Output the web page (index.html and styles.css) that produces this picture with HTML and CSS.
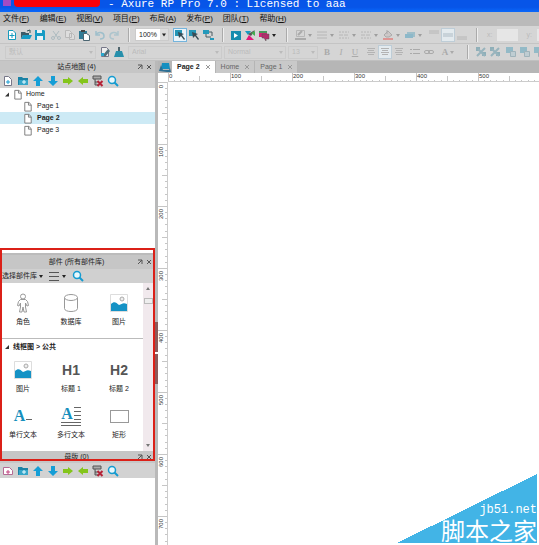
FILE: index.html
```html
<!DOCTYPE html>
<html lang="zh-CN">
<head>
<meta charset="utf-8">
<meta name="viewport" content="width=device-width, initial-scale=1">
<title>Axure RP Pro 7.0</title>
<link rel="stylesheet" href="styles.css">
</head>
<body>
<svg class="defs" aria-hidden="true">
  <symbol id="new" viewBox="0 0 12 12"><path d="M2.5 1.5h4.500l2.500 2.500v6.500h-7z" fill="#fff" stroke="#169bbd"/><path d="M6 4v5M3.500 6.500h5" stroke="#169bbd"/></symbol>
  <symbol id="page" viewBox="0 0 12 12"><path d="M2.500 1.500h4.500l2.500 2.500v7h-7zM6.500 1.500v3h3" fill="#fff" stroke="#777"/></symbol>
  <symbol id="addpage" viewBox="0 0 12 12"><path d="M2.500 1.500h4l3 3v6h-7z" fill="#fff" stroke="#778"/><path d="M6 5v4M4 7h4" stroke="#169bd0"/></symbol>
  <symbol id="addmaster" viewBox="0 0 12 12"><path d="M1.500 2.500h6l3 3v4h-9z" fill="#fff" stroke="#b56a94"/><path d="M6 5v4M4 7h4" stroke="#c2417f"/></symbol>
  <symbol id="open" viewBox="0 0 12 12"><path d="M1 3h4l1 1h3v2H3l-2 4z" fill="#3c5c68"/><path d="M3 6h9l-2 4H1z" fill="#159bc4"/><path d="M7 2l3-1v3" fill="none" stroke="#355"/></symbol>
  <symbol id="save" viewBox="0 0 12 12"><path d="M1 1h9l1 1v9H1z" fill="#159bc4"/><path d="M3 1h5v3H3zM3 7h6v4H3z" fill="#e8f4f8"/></symbol>
  <symbol id="cut" viewBox="0 0 12 12"><path d="M3 2l5 7M9 2L4 9" stroke="#aebbc0"/><circle cx="3" cy="9" r="1.500" fill="none" stroke="#aebbc0"/><circle cx="9" cy="9" r="1.500" fill="none" stroke="#aebbc0"/></symbol>
  <symbol id="copy" viewBox="0 0 12 12"><path d="M1.500 1.500h4l2 2v5h-6zM5.500 4.500h3l2 2v4h-5z" fill="#ddd" stroke="#b9b9b9"/></symbol>
  <symbol id="paste" viewBox="0 0 12 12"><path d="M1 2h8v8H1z" fill="#327c96"/><path d="M3 1h4v2H3z" fill="#444"/><path d="M5.500 4.500h3l3 2v5h-6z" fill="#fff" stroke="#4b6571"/></symbol>
  <symbol id="undo" viewBox="0 0 12 12"><path d="M2 2v4h4M2 6c2-4 8-3 8 1 0 2-2 3-4 3" fill="none" stroke="#9fbfcb" stroke-width="1.500"/></symbol>
  <symbol id="redo" viewBox="0 0 12 12"><path d="M10 2v4H6M10 6c-2-4-8-3-8 1 0 2 2 3 4 3" fill="none" stroke="#aec5cd" stroke-width="1.500"/></symbol>
  <symbol id="pointer" viewBox="0 0 12 12"><path d="M1 1h7v6H1z" fill="#2495b5"/><path d="M4 3l6 2-2 1 3 4-1 1-3-4-2 2z" fill="#374b54"/></symbol>
  <symbol id="connector" viewBox="0 0 12 12"><path d="M1 1h6v4H1zM8 9h4v2H8z" fill="#2499bb"/><path d="M4 5v3h5M7 3h3v4" fill="none" stroke="#4b5b61"/></symbol>
  <symbol id="preview" viewBox="0 0 12 12"><path d="M1 2h10v9H1z" fill="#168cae"/><path d="M4 4l4 2.500L4 9z" fill="#fff"/></symbol>
  <symbol id="share" viewBox="0 0 12 12"><path d="M1 2h6L4 6z" fill="#169ac0"/><path d="M11 1L7 7 4 5z" fill="#555"/><path d="M2 11l3-5 5 5z" fill="#e41678"/><path d="M7 4l4-2v5z" fill="#45aa50"/></symbol>
  <symbol id="publish" viewBox="0 0 12 12"><path d="M1 2h8v6H1z" fill="#d52375"/><path d="M1 2h8v2H1z" fill="#4a995c"/><path d="M4 5h7v5H8v2L6 9H4z" fill="#b22e6b" stroke="#555" stroke-width=".5"/></symbol>
  <symbol id="linecolor" viewBox="0 0 12 12"><path d="M2.500 1.500h8v6h-8z" fill="none" stroke="#aaa"/><path d="M4 6l4-4M1 10h11" stroke="#999" stroke-width="2"/></symbol>
  <symbol id="lines" viewBox="0 0 12 12"><path d="M1 3h10M1 6h10M1 9h10" stroke="#aaa"/></symbol>
  <symbol id="dashes" viewBox="0 0 12 12"><path d="M1 3h10M1 9h10" stroke="#aaa" stroke-dasharray="2 1"/><path d="M1 6h10" stroke="#aaa" stroke-dasharray="4 1"/></symbol>
  <symbol id="bucket" viewBox="0 0 12 12"><path d="M2 6l4-4 4 4-3 2H4zM5 1v4" fill="#c9c2c2" stroke="#999"/><path d="M1 10h10" stroke="#e17b78" stroke-width="2"/></symbol>
  <symbol id="shape" viewBox="0 0 12 12"><path d="M3 3h8v5H3z" fill="#87b5c4"/><path d="M1 5h8v4H1z" fill="#6fadc4"/></symbol>
  <symbol id="top" viewBox="0 0 12 12"><path d="M1 2h10M1 4h10" stroke="#aaa"/></symbol>
  <symbol id="mid" viewBox="0 0 12 12"><path d="M1 5h10M1 7h10" stroke="#9db2be"/></symbol>
  <symbol id="bot" viewBox="0 0 12 12"><path d="M1 8h10M1 10h10" stroke="#aaa"/></symbol>
  <symbol id="align" viewBox="0 0 12 12"><path d="M2 2.500h8M3 4.500h6M2 6.500h8M3 8.500h6" stroke="#a5a5a5"/></symbol>
  <symbol id="bullets" viewBox="0 0 12 12"><path d="M1 3.500h2M4 3.500h7M1 7.500h2M4 7.500h7" stroke="#999"/></symbol>
  <symbol id="link" viewBox="0 0 12 12"><rect x="1.500" y="4.500" width="5" height="3" rx="1.500" fill="none" stroke="#999"/><rect x="5.500" y="4.500" width="5" height="3" rx="1.500" fill="none" stroke="#999"/></symbol>
  <symbol id="styleedit" viewBox="0 0 12 12"><path d="M2.500 1.500h5l2 2v7h-7z" fill="#eee" stroke="#778"/><path d="M4 9l5-6 2 2-5 6z" fill="#536f79"/><path d="M2 7h3v3H2z" fill="#29a7ce"/></symbol>
  <symbol id="brush" viewBox="0 0 12 12"><path d="M5 1h2v5H5z" fill="#50656d"/><path d="M3 5h6l2 6H1z" fill="#268fab"/></symbol>
  <symbol id="group" viewBox="0 0 12 12"><path d="M1 1h4v4H1zM7 6h4v4H7z" fill="#729fad"/><path d="M2 10l8-8M3 3l7 7" stroke="#7fa7b4" stroke-width="2"/></symbol>
  <symbol id="layers" viewBox="0 0 12 12"><path d="M1 1h7v6H1z" fill="#78afc2"/><path d="M5.500 5.500h5v5h-5z" fill="#b6cbd2" stroke="#8ba6af"/></symbol>
  <symbol id="folder" viewBox="0 0 12 12"><path d="M1 2h4l1 1h5v7H1z" fill="#1b82a5"/><path d="M2 5h9v5H2z" fill="#35a6c9"/><path d="M7 5v4M5 7h4" stroke="#e8faff"/></symbol>
  <symbol id="up" viewBox="0 0 12 12"><path d="M6 1l5 5H8v5H4V6H1z" fill="#159ed6"/></symbol>
  <symbol id="down" viewBox="0 0 12 12"><path d="M6 11l5-5H8V1H4v5H1z" fill="#159ed6"/></symbol>
  <symbol id="right" viewBox="0 0 12 12"><path d="M11 6L6 2v2H1v4h5v2z" fill="#84c51b"/></symbol>
  <symbol id="left" viewBox="0 0 12 12"><path d="M1 6l5-4v2h5v4H6v2z" fill="#84c51b"/></symbol>
  <symbol id="delete" viewBox="0 0 12 12"><path d="M1 1h8v3H1zM3 4v6h3M3 7h3" fill="#aaa" stroke="#555"/><path d="M5.500 6l5 5M10.500 6l-5 5" stroke="#b42338" stroke-width="2"/></symbol>
  <symbol id="search" viewBox="0 0 12 12"><circle cx="5" cy="5" r="3.500" fill="#e9f8fc" stroke="#159bd0" stroke-width="1.500"/><path d="M7.500 7.500l3.500 3.500" stroke="#159bd0" stroke-width="2"/></symbol>
  <symbol id="tabs" viewBox="0 0 12 12"><path d="M3 2h7l1 6H2z" fill="#168fc0"/><path d="M0 10l2-6 2 5h6l1-2 1 4H8z" fill="#2d6f94"/></symbol>
  <symbol id="pop" viewBox="0 0 8 8"><path d="M2 2h4v4M6 2L2 6" fill="none" stroke="#555"/></symbol>
  <symbol id="close" viewBox="0 0 8 8"><path d="M2 2l4 4M6 2L2 6" stroke="currentColor"/></symbol>
  <symbol id="arrow" viewBox="0 0 6 6"><path d="M5 1v4H1z" fill="#333"/></symbol>
  <symbol id="caret" viewBox="0 0 8 8"><path d="M2 3h4L4 6z" fill="currentColor"/></symbol>
  <symbol id="menu" viewBox="0 0 12 12"><path d="M1 2.500h10M1 6.500h10M1 10.500h10" stroke="#555"/></symbol>
  <symbol id="person" viewBox="0 0 20 20"><circle cx="10" cy="3.500" r="2.500"/><path d="M7.500 6.500h5l2 2 1 4-1.500.5-1.500-3v4l1 5h-2.500L10 14l-1 5H6.500l1-5v-4L6 13l-1.500-.5 1-4z"/></symbol>
  <symbol id="database" viewBox="0 0 20 20"><path d="M3.500 4.500v11c0 4 13 4 13 0v-11"/><ellipse cx="10" cy="4.500" rx="6.500" ry="3"/></symbol>
  <symbol id="image" viewBox="0 0 20 20"><path d="M1.500 1.500h17v17h-17z" fill="#fff" stroke="#ddd"/><path d="M2 11c3-3 5-2 8 1 3-1 4-3 8-1v7H2z" fill="#1592c5"/><circle cx="13" cy="6" r="2" fill="#eee" stroke="#aaa"/></symbol>
  <symbol id="ticksh" viewBox="0 0 62 9"><path d="M.5 0v9M31.500 3v6M6.500 7v2M12.500 7v2M18.500 7v2M25.500 7v2M37.500 7v2M43.500 7v2M50.500 7v2M56.500 7v2" stroke="#c6c6c6"/></symbol>
  <symbol id="ticksv" viewBox="0 0 10 62"><path d="M0 .5h10M4 31.500h6M7 6.500h3M7 12.500h3M7 18.500h3M7 25.500h3M7 37.500h3M7 43.500h3M7 50.500h3M7 56.500h3" stroke="#c6c6c6"/></symbol>
</svg>

<header class="titlebar"><span class="badge"></span><span class="redacted"></span><span>- Axure RP Pro 7.0 : Licensed to aaa</span></header>
<nav class="menubar">
  <button>文件(<u>F</u>)</button><button>编辑(<u>E</u>)</button><button>视图(<u>V</u>)</button><button>项目(<u>P</u>)</button><button>布局(<u>A</u>)</button><button>发布(<u>P</u>)</button><button>团队(<u>T</u>)</button><button>帮助(<u>H</u>)</button>
</nav>
<div class="toolbar main-tools">
  <div class="group"><button aria-label="新建"><svg><use href="#new"/></svg></button><button aria-label="打开"><svg><use href="#open"/></svg></button><button aria-label="保存"><svg><use href="#save"/></svg></button></div>
  <div class="group"><button aria-label="剪切"><svg><use href="#cut"/></svg></button><button aria-label="复制"><svg><use href="#copy"/></svg></button><button aria-label="粘贴"><svg><use href="#paste"/></svg></button></div>
  <div class="group"><button aria-label="撤销"><svg><use href="#undo"/></svg></button><button aria-label="重做"><svg><use href="#redo"/></svg></button></div>
  <i class="sep"></i>
  <span class="pick zoom"><select aria-label="缩放"><option>100%</option></select><svg><use href="#caret"/></svg></span>
  <div class="group"><button class="on" aria-label="选择"><svg><use href="#pointer"/></svg></button><button aria-label="包含选择"><svg><use href="#pointer"/></svg></button><button aria-label="连接"><svg><use href="#connector"/></svg></button></div>
  <i class="sep"></i>
  <div class="group"><button aria-label="预览"><svg><use href="#preview"/></svg></button><button aria-label="共享"><svg><use href="#share"/></svg></button><button class="drop" aria-label="生成"><svg><use href="#publish"/></svg><svg class="caret"><use href="#caret"/></svg></button></div>
  <i class="sep"></i>
  <div class="group faded"><button class="drop" aria-label="线条颜色"><svg><use href="#linecolor"/></svg><svg class="caret"><use href="#caret"/></svg></button><button class="drop" aria-label="线宽"><svg><use href="#lines"/></svg><svg class="caret"><use href="#caret"/></svg></button><button class="drop" aria-label="线型"><svg><use href="#dashes"/></svg><svg class="caret"><use href="#caret"/></svg></button><button class="drop" aria-label="箭头"><svg><use href="#dashes"/></svg><svg class="caret"><use href="#caret"/></svg></button><button class="drop" aria-label="填充"><svg><use href="#bucket"/></svg><svg class="caret"><use href="#caret"/></svg></button><button class="drop" aria-label="阴影"><svg><use href="#shape"/></svg><svg class="caret"><use href="#caret"/></svg></button></div>
  <div class="group faded"><button aria-label="顶部"><svg><use href="#top"/></svg></button><button class="on" aria-label="中部"><svg><use href="#mid"/></svg></button><button aria-label="底部"><svg><use href="#bot"/></svg></button></div>
  <i class="sep"></i>
  <label class="coord">x:<input></label><label class="coord">y:<input></label>
</div>
<div class="toolbar format-tools">
  <span class="pick style"><select aria-label="样式"><option>默认</option></select><svg><use href="#caret"/></svg></span>
  <div class="group"><button aria-label="编辑样式"><svg><use href="#styleedit"/></svg></button><button aria-label="格式刷"><svg><use href="#brush"/></svg></button></div>
  <span class="pick family"><select aria-label="字体"><option>Arial</option></select><svg><use href="#caret"/></svg></span>
  <span class="pick weight"><select aria-label="字形"><option>Normal</option></select><svg><use href="#caret"/></svg></span>
  <span class="pick size"><select aria-label="字号"><option>13</option></select><svg><use href="#caret"/></svg></span>
  <div class="group letters"><button><b>B</b></button><button><em>I</em></button><button><u>U</u></button></div>
  <div class="group faded"><button aria-label="左对齐"><svg><use href="#align"/></svg></button><button class="on" aria-label="居中"><svg><use href="#align"/></svg></button><button aria-label="右对齐"><svg><use href="#align"/></svg></button></div>
  <div class="group faded"><button aria-label="列表"><svg><use href="#bullets"/></svg></button><button aria-label="链接"><svg><use href="#link"/></svg></button></div>
  <div class="group letters"><button class="drop"><b>A</b><svg class="caret"><use href="#caret"/></svg></button></div>
  <i class="sep"></i>
  <div class="group faded"><button aria-label="组合"><svg><use href="#group"/></svg></button><button aria-label="取消组合"><svg><use href="#group"/></svg></button></div>
  <div class="group faded"><button aria-label="置于顶层"><svg><use href="#layers"/></svg></button><button aria-label="置于底层"><svg><use href="#layers"/></svg></button><button aria-label="上移"><svg><use href="#layers"/></svg></button></div>
</div>

<div class="workspace">
  <aside class="sidebar">
    <section class="panel sitemap">
      <div class="panel-head"><h2>站点地图 (4)</h2><button aria-label="弹出"><svg><use href="#pop"/></svg></button><button aria-label="关闭"><svg><use href="#close"/></svg></button></div>
      <div class="panel-tools"><button aria-label="添加页面"><svg><use href="#addpage"/></svg></button><button aria-label="添加文件夹"><svg><use href="#folder"/></svg></button><button aria-label="上移"><svg><use href="#up"/></svg></button><button aria-label="下移"><svg><use href="#down"/></svg></button><button aria-label="降级"><svg><use href="#right"/></svg></button><button aria-label="升级"><svg><use href="#left"/></svg></button><button aria-label="删除"><svg><use href="#delete"/></svg></button><button aria-label="搜索"><svg><use href="#search"/></svg></button></div>
      <ul class="tree">
        <li class="root"><svg class="arrow"><use href="#arrow"/></svg><svg><use href="#page"/></svg>Home</li>
        <li><svg><use href="#page"/></svg>Page 1</li>
        <li class="selected"><svg><use href="#page"/></svg>Page 2</li>
        <li><svg><use href="#page"/></svg>Page 3</li>
      </ul>
    </section>
    <section class="panel widgets">
      <div class="panel-head"><h2>部件 (所有部件库)</h2><button aria-label="弹出"><svg><use href="#pop"/></svg></button><button aria-label="关闭"><svg><use href="#close"/></svg></button></div>
      <div class="library-bar"><button>选择部件库<svg class="caret"><use href="#caret"/></svg></button><button aria-label="选项"><svg><use href="#menu"/></svg><svg class="caret"><use href="#caret"/></svg></button><button aria-label="搜索"><svg><use href="#search"/></svg></button></div>
      <div class="library">
        <div class="library-list">
          <div class="tiles">
            <figure><svg class="outline"><use href="#person"/></svg><figcaption>角色</figcaption></figure>
            <figure><svg class="outline"><use href="#database"/></svg><figcaption>数据库</figcaption></figure>
            <figure><svg><use href="#image"/></svg><figcaption>图片</figcaption></figure>
          </div>
          <h3><svg class="arrow"><use href="#arrow"/></svg>线框图 &gt; 公共</h3>
          <div class="tiles">
            <figure><svg><use href="#image"/></svg><figcaption>图片</figcaption></figure>
            <figure><strong>H1</strong><figcaption>标题 1</figcaption></figure>
            <figure><strong>H2</strong><figcaption>标题 2</figcaption></figure>
            <figure><span class="glyph">A<i class="dash"></i></span><figcaption>单行文本</figcaption></figure>
            <figure><span class="glyph para">A<i class="copy-lines"></i></span><figcaption>多行文本</figcaption></figure>
            <figure><span class="rect"></span><figcaption>矩形</figcaption></figure>
          </div>
        </div>
        <div class="scrollbar"><svg class="flip"><use href="#caret"/></svg><i class="thumb"></i><svg class="end"><use href="#caret"/></svg></div>
      </div>
    </section>
    <section class="panel masters">
      <div class="panel-head"><h2>母版 (0)</h2><button aria-label="弹出"><svg><use href="#pop"/></svg></button><button aria-label="关闭"><svg><use href="#close"/></svg></button></div>
      <div class="panel-tools"><button aria-label="添加母版"><svg><use href="#addmaster"/></svg></button><button aria-label="添加文件夹"><svg><use href="#folder"/></svg></button><button aria-label="上移"><svg><use href="#up"/></svg></button><button aria-label="下移"><svg><use href="#down"/></svg></button><button aria-label="降级"><svg><use href="#right"/></svg></button><button aria-label="升级"><svg><use href="#left"/></svg></button><button aria-label="删除"><svg><use href="#delete"/></svg></button><button aria-label="搜索"><svg><use href="#search"/></svg></button></div>
      <div class="empty"></div>
    </section>
  </aside>
  <div class="splitter"><i class="grip"></i></div>
  <main class="editor">
    <nav class="tabs"><svg><use href="#tabs"/></svg><button class="tab active">Page 2<svg><use href="#close"/></svg></button><button class="tab">Home<svg><use href="#close"/></svg></button><button class="tab">Page 1<svg><use href="#close"/></svg></button></nav>
    <div class="ruler across">
      <span>0<svg><use href="#ticksh"/></svg></span><span>100<svg><use href="#ticksh"/></svg></span><span>200<svg><use href="#ticksh"/></svg></span><span>300<svg><use href="#ticksh"/></svg></span><span>400<svg><use href="#ticksh"/></svg></span><span>500<svg><use href="#ticksh"/></svg></span>
    </div>
    <div class="stage">
      <div class="ruler along">
        <span><b>0</b><svg><use href="#ticksv"/></svg></span><span><b>100</b><svg><use href="#ticksv"/></svg></span><span><b>200</b><svg><use href="#ticksv"/></svg></span><span><b>300</b><svg><use href="#ticksv"/></svg></span><span><b>400</b><svg><use href="#ticksv"/></svg></span><span><b>500</b><svg><use href="#ticksv"/></svg></span><span><b>600</b><svg><use href="#ticksv"/></svg></span><span><b>700</b><svg><use href="#ticksv"/></svg></span>
      </div>
      <div class="canvas"></div>
    </div>
  </main>
</div>
<div class="watermark"><span>jb51.net</span><strong>脚本之家</strong></div>
</body>
</html>
```
FILE: styles.css
```css
*, *::before, *::after { box-sizing: border-box; }
body {
  margin: 0;
  height: 100vh;
  display: flex;
  flex-direction: column;
  position: relative;
  overflow: hidden;
  background: #d2d2d2;
  color: #222;
  font: 7px/10px "Liberation Sans", "Noto Sans CJK SC", sans-serif;
}
.defs { position: absolute; width: 0; height: 0; }
svg { width: 12px; height: 12px; flex: none; display: block; }
button, select, input { font: inherit; color: inherit; border: 0; padding: 0; margin: 0; background: none; border-radius: 0; }
button { display: flex; align-items: center; justify-content: center; white-space: nowrap; }
h2, h3, ul, figure { margin: 0; padding: 0; font-size: inherit; font-weight: normal; }
svg.caret { width: 8px; height: 8px; }
svg.arrow { width: 6px; height: 6px; }

.titlebar {
  flex: none;
  display: flex;
  height: 12px;
  overflow: hidden;
  background: linear-gradient(#0755e8 60%, #0a68fa);
  color: #fff;
  font: 11px/8px "Liberation Mono", monospace;
  white-space: pre;
}
.badge { width: 8px; height: 6px; margin: 0 3px; background: #a04bc4; }
.redacted { width: 86px; height: 7px; margin-right: 8px; background: #f80008; border-radius: 0 0 4px 4px; }

.menubar {
  flex: none;
  display: grid;
  grid-template-columns: repeat(8, 1fr);
  width: 100%;
  height: 14px;
  padding: 0 243px 0 3px;
  background: #bababa;
  font-size: 8px;
  color: #111;
}
.menubar button { justify-content: flex-start; }

.toolbar { flex: none; display: flex; align-items: center; background: #d5d5d5; overflow: hidden; }
.toolbar > * { flex: none; }
.main-tools { height: 18px; padding-left: 5px; border-bottom: 1px solid #c4c4c4; }
.format-tools { height: 17px; padding-left: 5px; border-bottom: 1px solid #c0c0c0; }
.group { display: flex; align-items: center; margin-right: 2px; }
.group button { width: 14px; height: 14px; }
.group button.drop { width: 22px; }
.group .on { background: #eaf3f9; border: 1px solid #74b4dc; }
.faded { opacity: .7; color: #888; }
.faded .on { border-color: #b5cbd8; }
.sep { width: 2px; height: 14px; margin: 0 5px; border-left: 1px solid #aaa; border-right: 1px solid #eee; }
.pick { display: flex; align-items: center; height: 13px; color: #bbb; border: 1px solid #cbcbcb; margin-right: 2px; }
.pick select { flex: 1; min-width: 0; height: 11px; padding-left: 3px; appearance: none; }
.pick svg { width: 8px; height: 8px; }
.zoom { width: 34px; margin-right: 4px; background: #fff; color: #222; }
.zoom svg { height: 11px; background: #ddd; }
.style { width: 91px; }
.family { width: 94px; }
.weight { width: 62px; }
.size { width: 30px; }
.letters { color: #aaa; font: 9px/10px "Liberation Serif", serif; }
.coord { display: flex; align-items: center; gap: 5px; padding: 0 4px; color: #bbb; }
.coord input { width: 21px; height: 12px; background: #e6e6e6; }

.workspace { flex: 1; min-height: 0; display: flex; }
.sidebar { flex: none; width: 155px; display: flex; flex-direction: column; position: relative; }
.panel { display: flex; flex-direction: column; }
.sitemap { flex: 1 1 auto; }
.panel-head { display: flex; flex: none; height: 12px; align-items: center; background: #c6c6c6; padding-right: 2px; }
.panel-head h2 { flex: 1; text-align: center; padding-left: 18px; }
.panel-head button { width: 9px; color: #555; }
.panel-head svg { width: 8px; height: 8px; }
.panel-tools { display: flex; flex: none; align-items: center; gap: 3px; height: 15px; padding-left: 2px; background: #d2d2d2; }
.tree { flex: 1; list-style: none; background: #fff; }
.tree li { display: flex; align-items: center; height: 12px; gap: 3px; padding-left: 22px; }
.tree li.root { padding-left: 4px; gap: 2px; }
.tree li.selected { background: #cdeaf5; font-weight: bold; }
.tree svg { height: 11px; }

.widgets { flex: none; background: #fff; }
.widgets .panel-head { height: 16px; border-top: 2px solid #bbb; }
.library-bar { display: flex; align-items: center; gap: 4px; height: 14px; padding-left: 2px; background: #d0d0d0; }
.library-bar button:nth-child(2) { margin-left: -1px; }
.library { display: flex; }
.library-list { flex: 1; padding: 6px 0 11px 2px; }
.tiles { display: grid; grid-template-columns: repeat(3, 42px); gap: 8px 6px; }
figure { display: grid; grid-template-rows: 28px 10px; justify-items: center; align-items: center; text-align: center; }
figure svg { width: 20px; height: 20px; }
.outline { fill: #fff; stroke: #999; }
figure strong { color: #555; font-size: 14px; }
figcaption { white-space: nowrap; }
.library h3 { display: flex; align-items: center; gap: 3px; height: 17px; margin: 11px 0 1px; padding-left: 2px; border-top: 1px solid #bbb; font-weight: bold; }
.glyph { display: flex; align-items: flex-end; gap: 1px; color: #168fbd; font: bold 16px/16px "Liberation Serif", serif; }
.dash { width: 6px; height: 1px; margin-bottom: 4px; background: #666; }
.para { padding-bottom: 3px; border-bottom: 1px solid #666; box-shadow: 0 -2px 0 #fff inset, 0 -3px 0 #666 inset; }
.copy-lines { width: 7px; height: 14px; margin-bottom: 1px; background: repeating-linear-gradient(#666 0 1px, transparent 1px 4px); }
.rect { width: 19px; height: 13px; border: 1px solid #999; }
.scrollbar { display: flex; flex-direction: column; align-items: center; width: 10px; margin-right: 2px; padding: 2px 0; background: #f1e9ed; color: #777; }
.scrollbar svg { width: 8px; height: 8px; }
.flip { transform: rotate(180deg); }
.thumb { width: 9px; height: 6px; margin-top: 5px; background: #eee; border: 1px solid #bbb; }
.scrollbar .end { margin-top: auto; }
.masters { flex: none; height: 94px; }
.empty { flex: 1; background: #fff; }

/* Highlight around the widget library */
.widgets::after {
  content: "";
  position: absolute;
  left: 0;
  right: 0;
  bottom: 84px;
  height: 213px;
  border: 2px solid #db2018;
  pointer-events: none;
}

.splitter { flex: none; display: flex; align-items: center; width: 3px; background: #b9b9b9; }
.grip { width: 3px; height: 62px; margin-top: 100px; background: linear-gradient(#8b5a5a 48%, #fff 48% 52%, #8b5a5a 52%); }

.editor { flex: 1; min-width: 0; display: flex; flex-direction: column; background: #fff; }
.tabs { display: flex; flex: none; height: 12px; background: #b6b6b6; }
.tabs > svg { margin: 0 1px; }
.tab { gap: 4px; padding: 0 3px 0 5px; background: #c9c9c9; border-right: 1px solid #b5b5b5; color: #666; }
.tab svg { width: 8px; height: 8px; color: #999; }
.tab.active { background: #fff; color: #222; font-weight: bold; }
.ruler { display: flex; overflow: hidden; font-size: 6px; line-height: 7px; color: #333; }
.ruler span { flex: none; position: relative; }
.ruler svg { position: absolute; left: 0; top: 0; }
.across { flex: none; height: 9px; margin-left: 10px; border-bottom: 1px solid #ccc; }
.across span { width: 62px; padding-left: 1px; }
.across svg { width: 62px; height: 9px; }
.stage { flex: 1; min-height: 0; display: flex; }
.along { flex: none; flex-direction: column; width: 10px; border-right: 1px solid #ccc; }
.along span { height: 62px; padding-top: 3px; }
.along b { display: block; font-weight: normal; writing-mode: vertical-rl; transform: rotate(180deg); width: 7px; }
.along svg { width: 10px; height: 62px; }
.canvas { flex: 1; }

.watermark {
  position: absolute;
  right: 2px;
  bottom: 2px;
  display: flex;
  flex-direction: column;
  align-items: flex-end;
  justify-content: flex-end;
  width: 140px;
  height: 69px;
  background: linear-gradient(to bottom right, transparent 50%, #42b4e6 50%);
  color: #fff;
  font: 12px/14px "Liberation Mono", monospace;
}
.watermark strong { font: 24px/26px "Noto Sans CJK SC", sans-serif; }
```
